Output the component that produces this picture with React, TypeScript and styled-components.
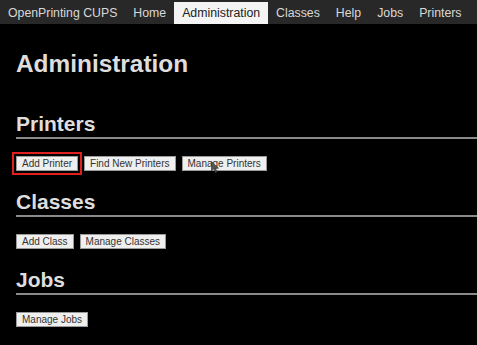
import styled, { createGlobalStyle } from 'styled-components';

const GlobalStyle = createGlobalStyle`
  html, body {
    margin: 0;
    padding: 0;
    background: #000;
    overflow: hidden;
  }
  body {
    font-family: 'Liberation Sans', Arial, sans-serif;
    color: #ddd;
  }
`;

const navItems = ['OpenPrinting CUPS', 'Home', 'Administration', 'Classes', 'Help', 'Jobs', 'Printers'];

const sections = [
  { title: 'Printers', buttons: ['Add Printer', 'Find New Printers', 'Manage Printers'] },
  { title: 'Classes', buttons: ['Add Class', 'Manage Classes'] },
  { title: 'Jobs', buttons: ['Manage Jobs'] },
];

export default function App() {
  return (
    <Page>
      <GlobalStyle />
      <NavBar>
        {navItems.map((item) => (
          <NavItem key={item} active={item === 'Administration'}>
            {item}
          </NavItem>
        ))}
      </NavBar>
      <Content>
        <Title>Administration</Title>
        {sections.map((s) => (
          <Section key={s.title}>
            <SectionTitle>{s.title}</SectionTitle>
            <ButtonRow>
              {s.buttons.map((b) => (
                <ActionButton key={b} highlighted={b === 'Add Printer'}>
                  {b}
                  {b === 'Manage Printers' && (
                    <Cursor width="8" height="12" viewBox="0 0 8 12">
                      <path d="M0.5 0.5 L0.5 10 L2.8 7.8 L4.5 11.5 L6 10.8 L4.4 7.2 L7.5 7.2 Z" fill="#555" stroke="#333" strokeWidth="0.6" />
                    </Cursor>
                  )}
                </ActionButton>
              ))}
            </ButtonRow>
          </Section>
        ))}
      </Content>
    </Page>
  );
}

const Page = styled.div`
  width: 477px;
  height: 345px;
  background: #000;
`;

const NavBar = styled.div`
  display: flex;
  align-items: flex-end;
  height: 24px;
  padding-top: 2px;
  box-sizing: border-box;
  background: #282828;
  white-space: nowrap;
`;

const NavItem = styled.div<{ active?: boolean }>`
  height: 22px;
  line-height: 22px;
  padding: 0 8px;
  font-size: 12.3px;
  color: ${({ active }) => (active ? '#222' : '#d8d8d8')};
  background: ${({ active }) => (active ? '#f4f4f4' : 'transparent')};
`;

const Content = styled.div`
  padding: 26px 0 0 16px;
`;

const Title = styled.h1`
  margin: 0 0 34px;
  font-size: 24.4px;
  line-height: 28px;
  font-weight: bold;
  color: #dedede;
`;

const Section = styled.section`
  margin-bottom: 19px;
`;

const SectionTitle = styled.h2`
  margin: 0;
  font-size: 21px;
  line-height: 24px;
  font-weight: bold;
  color: #dedede;
  padding-bottom: 1px;
  border-bottom: 2px solid #8a8a8a;
`;

const ButtonRow = styled.div`
  display: flex;
  gap: 6px;
  margin-top: 17px;
`;

const ActionButton = styled.div<{ highlighted?: boolean }>`
  position: relative;
  height: 15px;
  box-sizing: border-box;
  padding: 0 5px;
  font-size: 10px;
  line-height: 13px;
  color: #333;
  background: #efefef;
  border: 1px solid #9a9a9a;
  white-space: nowrap;
  outline: ${({ highlighted }) => (highlighted ? '2px solid #e02020' : 'none')};
  outline-offset: 2px;
`;

const Cursor = styled.svg`
  position: absolute;
  left: 28px;
  top: 4px;
`;
